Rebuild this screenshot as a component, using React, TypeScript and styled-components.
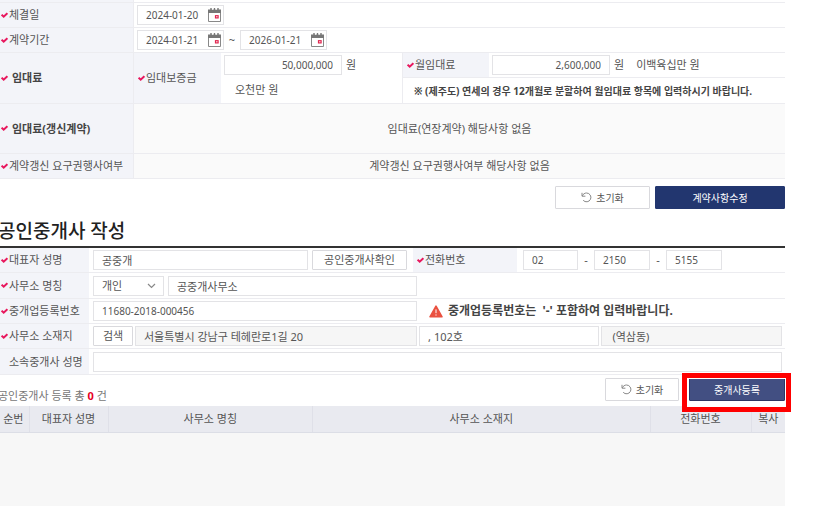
import React from "react";
import styled, { createGlobalStyle, css } from "styled-components";

const GlobalStyle = createGlobalStyle`
  * { box-sizing: border-box; }
  html, body { margin: 0; background: #fff; overflow-x: hidden; }
  body, button, input, select, table {
    font-family: "Noto Sans", "Noto Sans CJK KR", sans-serif;
    font-size: 11px;
    line-height: 16px;
    color: #555;
  }
`;

const line = "#ececf0";

const Page = styled.main`
  display: flex;
  flex-direction: column;
  min-height: 100vh;
  margin: 0 44px 0 -2px;
`;

const FormPanel = styled.section<{ $strong?: boolean }>`
  border-top: ${(p) => (p.$strong ? "2px solid #333" : "0")};
`;

const Row = styled.div<{ $columns: string; $height: number }>`
  display: grid;
  grid-template-columns: ${(p) => p.$columns};
  min-height: ${(p) => p.$height}px;
  border-bottom: 1px solid ${line};
`;

const labelCell = css<{ $divider?: boolean; $strong?: boolean; $inset?: boolean }>`
  display: flex;
  align-items: center;
  gap: ${(p) => (p.$strong ? 4 : 1)}px;
  padding-left: ${(p) => (p.$inset ? 4 : 3)}px;
  background: #f3f4f9;
  border-right: ${(p) => (p.$divider ? `1px solid ${line}` : "0")};
  font-weight: ${(p) => (p.$strong ? 700 : 400)};
  color: ${(p) => (p.$strong ? "#444" : "#555")};
  white-space: nowrap;
`;

const LabelCell = styled.label`
  ${labelCell}
`;

const HeadCell = styled.div`
  ${labelCell}
`;

const Cell = styled.div<{ $gap?: number; $left?: number; $right?: number }>`
  display: flex;
  align-items: center;
  min-width: 0;
  gap: ${(p) => p.$gap ?? 4}px;
  padding: 0 ${(p) => p.$right ?? 0}px 0 ${(p) => p.$left ?? 3}px;
  white-space: nowrap;
`;

const AddressCell = styled.div`
  display: grid;
  grid-template-columns: 40px minmax(0, 283fr) minmax(0, 180fr) minmax(0, 182fr);
  align-items: center;
  gap: 2px;
  padding: 0 3px 0 4px;
`;

const EmptyCell = styled.div`
  display: flex;
  align-items: center;
  justify-content: center;
  background: #fafafa;
`;

const Stack = styled.div<{ $divider?: boolean }>`
  display: grid;
  grid-template-rows: ${(p) => (p.$divider ? 25 : 24)}px 1fr;
  min-width: 0;
  border-left: ${(p) => (p.$divider ? `1px solid ${line}` : "0")};
`;

const SplitRow = styled.div`
  display: grid;
  grid-template-columns: 86px minmax(0, 1fr);
  border-bottom: 1px solid ${line};
`;

const WordAmount = styled.span`
  padding-left: 8px;
`;

const Note = styled.strong`
  display: flex;
  align-items: center;
  padding-left: 11px;
  font-size: 10px;
  color: #444;
  white-space: nowrap;
`;

const TextInput = styled.input<{
  $width?: number;
  $grow?: number;
  $numeric?: boolean;
  $end?: boolean;
}>`
  flex: ${(p) => (p.$grow ? `${p.$grow} 1 0` : "0 0 auto")};
  width: ${(p) => (p.$width ? `${p.$width}px` : "100%")};
  min-width: 0;
  height: 20px;
  padding: 0 8px;
  border: 1px solid #e3e3e6;
  background: #fff;
  font-size: ${(p) => (p.$numeric ? 10 : 11)}px;
  text-align: ${(p) => (p.$end ? "right" : "left")};
  outline: none;
  &:read-only {
    background: #f6f6f6;
  }
`;

const DateBox = styled.span`
  display: flex;
  align-items: center;
  width: 87px;
  height: 20px;
  padding: 0 2px 0 8px;
  border: 1px solid #e3e3e6;
  input {
    flex: 1;
    min-width: 0;
    padding: 0;
    border: 0;
    outline: none;
    font-size: 10px;
  }
  button {
    display: flex;
    padding: 0;
    border: 0;
    background: none;
  }
`;

const SelectBox = styled.span`
  display: grid;
  grid-template-columns: 1fr 16px;
  align-items: center;
  flex: 0 0 auto;
  width: 71px;
  height: 20px;
  border: 1px solid #e3e3e6;
  select {
    grid-area: 1 / 1 / 2 / 3;
    padding: 0 8px;
    border: 0;
    background: none;
    appearance: none;
    outline: none;
  }
  svg {
    grid-area: 1 / 2;
    pointer-events: none;
  }
`;

const Button = styled.button<{ $width: number }>`
  flex: 0 0 auto;
  width: ${(p) => p.$width}px;
  height: 20px;
  padding: 0;
  border: 1px solid #d9d9dd;
  border-radius: 1px;
  background: #fff;
`;

const ActionButton = styled.button<{ $width: number; $tone?: "navy" | "active" }>`
  display: flex;
  align-items: center;
  justify-content: center;
  gap: 4px;
  width: ${(p) => p.$width}px;
  height: 23px;
  padding: 0;
  border: 1px solid #d9d9dd;
  border-radius: 1px;
  background: #fff;
  font-size: 10px;
  ${(p) =>
    p.$tone === "navy" && "background: #22366f; border-color: #22366f; color: #fff;"}
  ${(p) =>
    p.$tone === "active" && "background: #424f82; border-color: #2c3663; color: #fff;"}
`;

const Actions = styled.div`
  display: flex;
  justify-content: flex-end;
  gap: 5px;
  padding-top: 7px;
`;

const Title = styled.h2`
  margin: 0;
  padding: 8px 0 1px;
  font-size: 19px;
  line-height: 28px;
  font-weight: 500;
  color: #222;
`;

const Warning = styled.strong`
  display: flex;
  align-items: center;
  gap: 5px;
  font-size: 12px;
  color: #444;
  white-space: pre;
`;

const Dash = styled.span`
  flex: 0 0 16px;
  text-align: center;
`;

const Summary = styled.div`
  display: flex;
  justify-content: space-between;
  height: 31px;
`;

const Count = styled.p`
  align-self: flex-end;
  margin: 0;
  line-height: 20px;
  color: #777;
  b {
    color: #e6001f;
  }
`;

const SummaryActions = styled.div`
  display: flex;
  gap: 10px;
  padding-top: 3px;
`;

const Highlighted = styled.span`
  position: relative;
`;

const HighlightFrame = styled.span`
  position: absolute;
  inset: -5px -6px -6px -7px;
  border: 5px solid #ff0000;
  box-shadow: inset 0 0 0 1px #fff;
  pointer-events: none;
`;

const ListArea = styled.section`
  flex: 1;
  background: #f7f7f7;
`;

const ListTable = styled.table`
  width: 100%;
  table-layout: fixed;
  border-collapse: collapse;
  th {
    height: 26px;
    padding: 0;
    background: #e9eaf0;
    border-bottom: 1px solid #dcdee6;
    font-weight: 400;
    white-space: nowrap;
  }
  th + th {
    border-left: 1px solid #dfe0e8;
  }
`;

const ListColumn = styled.col<{ $width: string }>`
  width: ${(p) => p.$width};
`;

const Check = () => (
  <svg width="7" height="7" viewBox="0 0 7 7" fill="none" aria-hidden="true">
    <path d="M0.6 2.6 2.7 4.7 6.4 1.1" stroke="#e8175d" strokeWidth="2" />
  </svg>
);

const CalendarIcon = () => (
  <svg width="13" height="14" viewBox="0 0 13 14" fill="none" aria-hidden="true">
    <path d="M.5 4v9.5h12V4" stroke="#888" />
    <path d="M0 1.5h13V5H0z" fill="#777" />
    <path d="M3 0v2.5M6.5 0v2.5M10 0v2.5" stroke="#777" strokeWidth="1.4" />
    <path d="M4.7 0v2M8.2 0v2" stroke="#fff" strokeWidth=".8" />
    <rect x="7.5" y="7.7" width="2.6" height="2.2" stroke="#e0254f" strokeWidth="1.2" />
  </svg>
);

const ResetIcon = () => (
  <svg width="11" height="11" viewBox="0 0 11 11" fill="none" stroke="#888" aria-hidden="true">
    <path d="M1 .8v3.4h3.4" />
    <path d="M1.3 3.9C2.2 2 3.7 1 5.6 1a4.4 4.4 0 1 1-3.4 7.3" />
  </svg>
);

const ChevronIcon = () => (
  <svg width="9" height="6" viewBox="0 0 9 6" fill="none" aria-hidden="true">
    <path d="M1 1l3.5 3.5L8 1" stroke="#888" strokeWidth="1.2" />
  </svg>
);

const WarningIcon = () => (
  <svg width="14" height="13" viewBox="0 0 14 13" aria-hidden="true">
    <path
      d="M7 1.2 13 11.8H1z"
      fill="#ea5140"
      stroke="#ea5140"
      strokeWidth="1.6"
      strokeLinejoin="round"
    />
    <path d="M7 4.4v3.8M7 9.4v1.2" stroke="#fff" />
  </svg>
);

const DateField = ({ id, value, name }: { id: string; value: string; name: string }) => (
  <DateBox>
    <input id={id} defaultValue={value} aria-label={name} />
    <button type="button" aria-label={`${name} 선택`}>
      <CalendarIcon />
    </button>
  </DateBox>
);

const single = "136px minmax(0, 1fr)";
const office = "91px minmax(0, 1fr)";
const officeHalf = "91px minmax(0, 328fr) minmax(0, 368fr)";

const listColumns = [
  { name: "순번", width: "31px" },
  { name: "대표자 성명", width: "79px" },
  { name: "사무소 명칭", width: "26%" },
  { name: "사무소 소재지", width: "auto" },
  { name: "전화번호", width: "101px" },
  { name: "복사", width: "34px" },
];

export default function App() {
  return (
    <>
      <GlobalStyle />
      <Page>
        <FormPanel>
          <Row $columns={single} $height={3}>
            <HeadCell $divider />
          </Row>
          <Row $columns={single} $height={25}>
            <LabelCell htmlFor="signed" $divider>
              <Check />
              체결일
            </LabelCell>
            <Cell>
              <DateField id="signed" value="2024-01-20" name="체결일" />
            </Cell>
          </Row>
          <Row $columns={single} $height={25}>
            <LabelCell htmlFor="start" $divider>
              <Check />
              계약기간
            </LabelCell>
            <Cell $gap={0}>
              <DateField id="start" value="2024-01-21" name="계약 시작일" />
              <Dash>~</Dash>
              <DateField id="end" value="2026-01-21" name="계약 종료일" />
            </Cell>
          </Row>
          <Row $columns="136px 87px minmax(0, 181fr) minmax(0, 383fr)" $height={51}>
            <HeadCell $divider $strong>
              <Check />
              임대료
            </HeadCell>
            <LabelCell htmlFor="deposit" $inset>
              <Check />
              임대보증금
            </LabelCell>
            <Stack>
              <Cell>
                <TextInput id="deposit" defaultValue="50,000,000" $width={118} $numeric $end />
                원
              </Cell>
              <Cell $left={14}>오천만 원</Cell>
            </Stack>
            <Stack $divider>
              <SplitRow>
                <LabelCell htmlFor="rent" $inset>
                  <Check />
                  월임대료
                </LabelCell>
                <Cell>
                  <TextInput id="rent" defaultValue="2,600,000" $width={118} $numeric $end />
                  원<WordAmount>이백육십만 원</WordAmount>
                </Cell>
              </SplitRow>
              <Note>※ (제주도) 연세의 경우 12개월로 분할하여 월임대료 항목에 입력하시기 바랍니다.</Note>
            </Stack>
          </Row>
          <Row $columns={single} $height={50}>
            <HeadCell $divider $strong>
              <Check />
              임대료(갱신계약)
            </HeadCell>
            <EmptyCell>임대료(연장계약) 해당사항 없음</EmptyCell>
          </Row>
          <Row $columns={single} $height={25}>
            <HeadCell $divider>
              <Check />
              계약갱신 요구권행사여부
            </HeadCell>
            <EmptyCell>계약갱신 요구권행사여부 해당사항 없음</EmptyCell>
          </Row>
        </FormPanel>
        <Actions>
          <ActionButton type="button" $width={95}>
            <ResetIcon />
            초기화
          </ActionButton>
          <ActionButton type="button" $width={130} $tone="navy">
            계약사항수정
          </ActionButton>
        </Actions>

        <Title>공인중개사 작성</Title>
        <FormPanel $strong>
          <Row $columns="91px minmax(0, 324fr) 104px minmax(0, 268fr)" $height={25}>
            <LabelCell htmlFor="agent">
              <Check />
              대표자 성명
            </LabelCell>
            <Cell $left={4} $right={6}>
              <TextInput id="agent" defaultValue="공중개" $grow={1} />
              <Button type="button" $width={95}>
                공인중개사확인
              </Button>
            </Cell>
            <LabelCell htmlFor="tel1" $inset>
              <Check />
              전화번호
            </LabelCell>
            <Cell $left={6} $gap={0}>
              <TextInput id="tel1" defaultValue="02" $width={55} $numeric />
              <Dash>-</Dash>
              <TextInput aria-label="전화번호 가운데 자리" defaultValue="2150" $width={56} $numeric />
              <Dash>-</Dash>
              <TextInput aria-label="전화번호 끝자리" defaultValue="5155" $width={56} $numeric />
            </Cell>
          </Row>
          <Row $columns={officeHalf} $height={26}>
            <LabelCell htmlFor="office">
              <Check />
              사무소 명칭
            </LabelCell>
            <Cell $left={4}>
              <SelectBox>
                <select aria-label="사무소 구분" defaultValue="개인">
                  <option>개인</option>
                  <option>법인</option>
                </select>
                <ChevronIcon />
              </SelectBox>
              <TextInput id="office" defaultValue="공중개사무소" $grow={1} />
            </Cell>
          </Row>
          <Row $columns={officeHalf} $height={25}>
            <LabelCell htmlFor="license">
              <Check />
              중개업등록번호
            </LabelCell>
            <Cell $left={4}>
              <TextInput id="license" defaultValue="11680-2018-000456" $grow={1} $numeric />
            </Cell>
            <Cell $left={12}>
              <Warning>
                <WarningIcon />
                {"중개업등록번호는  '-' 포함하여 입력바랍니다."}
              </Warning>
            </Cell>
          </Row>
          <Row $columns={office} $height={25}>
            <LabelCell htmlFor="address">
              <Check />
              사무소 소재지
            </LabelCell>
            <AddressCell>
              <Button type="button" $width={40}>
                검색
              </Button>
              <TextInput id="address" readOnly defaultValue="서울특별시 강남구 테헤란로1길 20" />
              <TextInput aria-label="상세 주소" defaultValue=", 102호" />
              <TextInput aria-label="동" readOnly defaultValue=" (역삼동)" />
            </AddressCell>
          </Row>
          <Row $columns={office} $height={26}>
            <LabelCell htmlFor="members">
              <svg width="7" height="7" aria-hidden="true" />
              소속중개사 성명
            </LabelCell>
            <Cell $left={4} $right={3}>
              <TextInput id="members" $grow={1} />
            </Cell>
          </Row>
        </FormPanel>

        <Summary>
          <Count>
            공인중개사 등록 총 <b>0</b> 건
          </Count>
          <SummaryActions>
            <ActionButton type="button" $width={74}>
              <ResetIcon />
              초기화
            </ActionButton>
            <Highlighted>
              <ActionButton type="button" $width={96} $tone="active">
                중개사등록
              </ActionButton>
              <HighlightFrame />
            </Highlighted>
          </SummaryActions>
        </Summary>
        <ListArea>
          <ListTable>
            <colgroup>
              {listColumns.map((c) => (
                <ListColumn key={c.name} $width={c.width} />
              ))}
            </colgroup>
            <thead>
              <tr>
                {listColumns.map((c) => (
                  <th key={c.name} scope="col">
                    {c.name}
                  </th>
                ))}
              </tr>
            </thead>
            <tbody />
          </ListTable>
        </ListArea>
      </Page>
    </>
  );
}
